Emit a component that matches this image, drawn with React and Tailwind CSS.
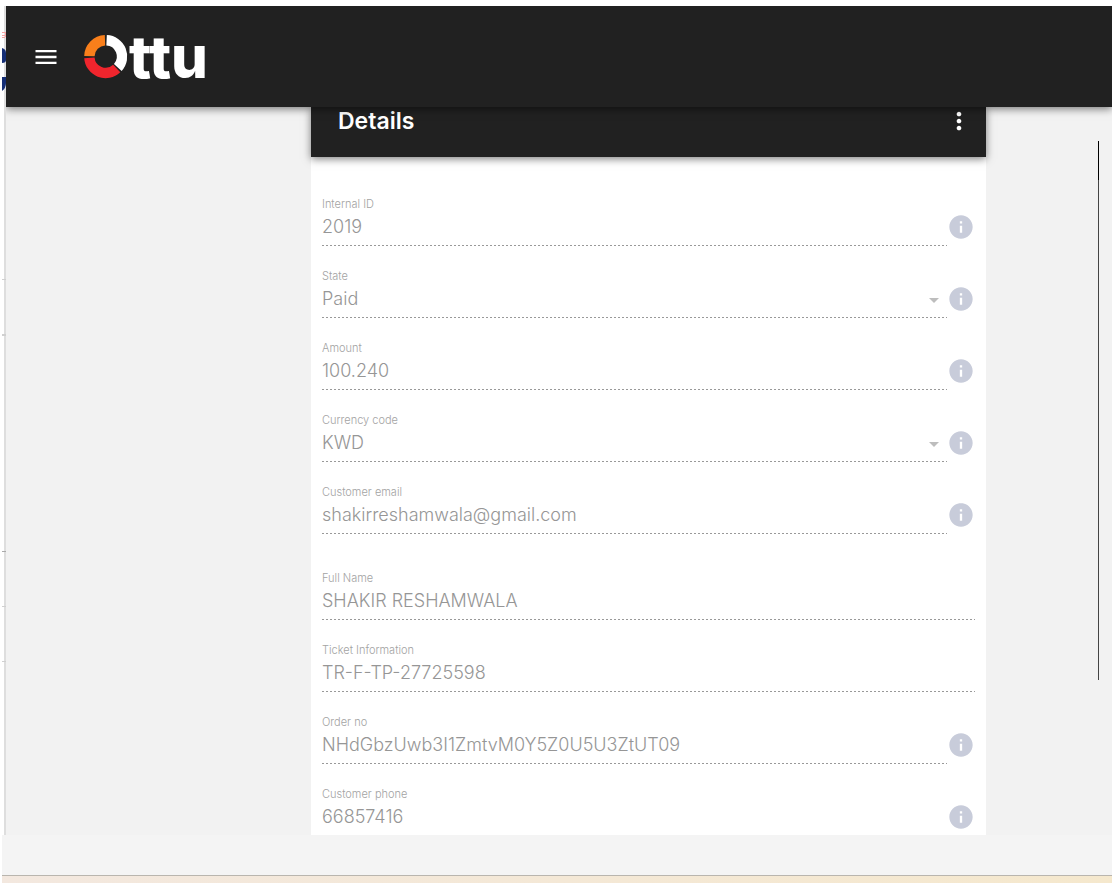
import { MdArrowDropDown, MdInfo, MdMenu, MdMoreVert } from 'react-icons/md';

const PAYMENT_FIELDS = [
  { id: 'internal-id', label: 'Internal ID', value: '2019', info: true },
  { id: 'state', label: 'State', value: 'Paid', info: true, select: true },
  { id: 'amount', label: 'Amount', value: '100.240', info: true },
  { id: 'currency', label: 'Currency code', value: 'KWD', info: true, select: true },
  { id: 'email', label: 'Customer email', value: 'shakirreshamwala@gmail.com', info: true },
];

const EXTRA_FIELDS = [
  { id: 'full-name', label: 'Full Name', value: 'SHAKIR RESHAMWALA' },
  { id: 'ticket', label: 'Ticket Information', value: 'TR-F-TP-27725598' },
  { id: 'order-no', label: 'Order no', value: 'NHdGbzUwb3I1ZmtvM0Y5Z0U5U3ZtUT09', info: true },
  { id: 'phone', label: 'Customer phone', value: '66857416', info: true },
];

const controlClass =
  'block h-9 w-full appearance-none rounded-none bg-transparent pb-[3px] text-lg font-light text-[#969696] opacity-100 outline-none ' +
  'bg-[repeating-linear-gradient(90deg,#999_0,#999_2px,#fff_2px,#fff_4px)] bg-[length:100%_1px] bg-bottom bg-no-repeat';

function Field({ id, label, value, info, select }) {
  return (
    <div>
      <label htmlFor={id} className="block text-[11px] leading-3 font-light text-[#a3a3a3]">
        {label}
      </label>
      <div className="flex items-start">
        <div className="relative min-w-0 flex-1">
          {select ? (
            <>
              <select id={id} disabled defaultValue={value} className={controlClass}>
                <option>{value}</option>
              </select>
              <MdArrowDropDown size={24} className="pointer-events-none absolute top-[6px] right-px text-[#bdbdbd]" />
            </>
          ) : (
            <input id={id} type="text" disabled defaultValue={value} className={controlClass} />
          )}
        </div>
        {info && (
          <button type="button" aria-label={`About ${label}`} className="h-[34px] shrink-0 text-[#c8ccda]">
            <MdInfo size={28} />
          </button>
        )}
      </div>
    </div>
  );
}

function Logo() {
  return (
    <a href="#" aria-label="Ottu" className="flex items-center gap-px text-white">
      <svg width="44" height="44" viewBox="0 0 44 44" fill="none" strokeWidth="10.4">
        <path d="M5.4 21.2A16.2 16.2 0 0 1 21 5.3" stroke="#f97f1b" />
        <path d="M22.6 5.3A16.2 16.2 0 0 1 33.8 32.4" stroke="#fff" />
        <path d="M32.7 33.5A16.2 16.2 0 0 1 5.4 22.8" stroke="#f0252d" />
      </svg>
      <span className="text-[58px] leading-none font-extrabold">ttu</span>
    </a>
  );
}

// Sliver of the page behind the panel
function PageEdge() {
  return (
    <div className="relative w-[6px] shrink-0 border-r-2 border-[#dedede]">
      <svg width="4" height="660" viewBox="0 0 4 660" className="absolute top-0 left-[2px]">
        <path d="M0 26.500h4M3.500 26v5M0 29.500h3M0 31.500h3" stroke="#f5a3a3" />
        <path d="M0 42q4 1 4 5v7q0 3-4 3zM0 71h4v6q0 5-4 8z" fill="#142d74" />
        <path d="M0 273.500h4M0 600.500h4M0 655.500h4" stroke="#d0d0d0" />
        <path d="M0 329h4" stroke="#d0d0d0" strokeWidth="2" />
        <path d="M0 545.500h4" stroke="#aaa" />
      </svg>
    </div>
  );
}

export default function App() {
  return (
    <div className="flex h-screen flex-col bg-white pt-[6px] pr-[2px] pb-[2px] font-[Inter,sans-serif]">
      <div className="flex min-h-0 flex-1">
        <PageEdge />
        <div className="flex min-w-0 flex-1 flex-col overflow-hidden">
          <header className="z-10 flex h-[101px] shrink-0 items-center gap-6 bg-[#212121] pl-[26px] shadow-[0_2px_8px_rgba(0,0,0,0.5)]">
            <button type="button" aria-label="Open menu" className="text-white">
              <MdMenu size={28} />
            </button>
            <Logo />
          </header>

          <div className="flex min-h-0 flex-1 overflow-hidden bg-[#f2f2f2] pl-[305px]">
            <main className="min-w-0 flex-1 bg-white">
              <div className="flex h-[50px] items-start justify-between bg-[#212121] pr-[13px] pl-[27px] text-white shadow-[0_2px_8px_rgba(0,0,0,0.5)]">
                <h1 className="text-[23px] leading-7 font-semibold">Details</h1>
                <button type="button" aria-label="More options">
                  <MdMoreVert size={28} />
                </button>
              </div>
              <form className="flex flex-col gap-[38px] px-[11px] pt-[41px]">
                <div className="flex flex-col gap-6">
                  {PAYMENT_FIELDS.map((field) => <Field key={field.id} {...field} />)}
                </div>
                <div className="flex flex-col gap-6">
                  {EXTRA_FIELDS.map((field) => <Field key={field.id} {...field} />)}
                </div>
              </form>
            </main>
            <div className="flex w-[126px] shrink-0 justify-end pt-[34px] pr-[13px]">
              <div className="h-[539px] w-px bg-[#444]">
                <div className="h-[39px] bg-black" />
              </div>
            </div>
          </div>
        </div>
      </div>
      <footer className="ml-[2px] shrink-0">
        <div className="h-10 bg-[#f4f4f4]" />
        <div className="h-2 border-t border-[#b9b5ae] bg-linear-to-r from-[#f3e8df] to-[#f5e8cd]" />
      </footer>
    </div>
  );
}
